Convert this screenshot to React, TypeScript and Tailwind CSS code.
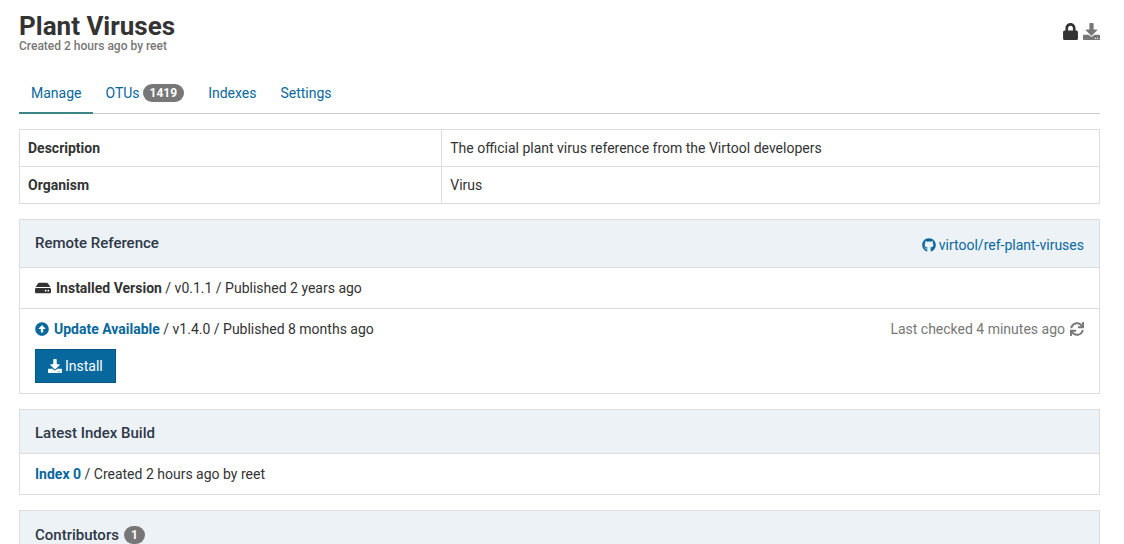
import type { ReactNode } from "react";
import {
  FaArrowAltCircleUp,
  FaDownload,
  FaGithub,
  FaHdd,
  FaLock,
  FaSync,
} from "react-icons/fa";

function Badge({ children }: { children: ReactNode }) {
  return (
    <span className="inline-block rounded-full bg-[#777777] px-[7px] py-[3px] text-center text-xs leading-3 font-bold text-white">
      {children}
    </span>
  );
}

function Tab({ active, children }: { active?: boolean; children: ReactNode }) {
  return (
    <a
      href="#"
      aria-current={active ? "page" : undefined}
      className={
        active
          ? "-mb-px flex items-center gap-[3px] border-b-2 border-[#3c8786] px-3 pt-2.5 pb-[9px] text-[#07689d]"
          : "-mb-px flex items-center gap-[3px] border-b-2 border-transparent px-3 pt-2.5 pb-[9px] text-[#07689d]"
      }
    >
      {children}
    </a>
  );
}

function Panel({ header, children }: { header: ReactNode; children?: ReactNode }) {
  return (
    <section className="mt-[15px] border border-[#dddddd]">
      <header className="flex items-center justify-between bg-[#edf2f7] px-[15px] text-[#2d3748]">
        {header}
      </header>
      {children}
    </section>
  );
}

export default function App() {
  return (
    <main className="h-screen overflow-hidden bg-white pt-3 pr-6 pl-[19px] font-['Roboto',sans-serif] text-sm leading-5 text-[#333333]">
      <header className="flex items-center justify-between">
        <div>
          <h1 className="text-[26px] leading-7 font-bold">Plant Viruses</h1>
          <p className="text-xs leading-3 font-medium text-[#777777]">
            Created 2 hours ago by reet
          </p>
        </div>
        <div className="flex items-center gap-1 pb-0.5 text-[17px]">
          <FaLock aria-label="Locked" />
          <button type="button" aria-label="Download" className="text-[#777777]">
            <FaDownload />
          </button>
        </div>
      </header>

      <nav className="mt-[21px] flex border-b border-[#cccccc]">
        <Tab active>Manage</Tab>
        <Tab>
          OTUs <Badge>1419</Badge>
        </Tab>
        <Tab>Indexes</Tab>
        <Tab>Settings</Tab>
      </nav>

      <table className="mt-[15px] w-full table-fixed border-collapse border border-[#dddddd]">
        <tbody>
          <tr className="border-b border-[#dddddd]">
            <th className="w-[39.1%] border-r border-[#dddddd] p-2 text-left font-bold">
              Description
            </th>
            <td className="p-2">The official plant virus reference from the Virtool developers</td>
          </tr>
          <tr>
            <th className="border-r border-[#dddddd] p-2 text-left font-bold">Organism</th>
            <td className="p-2">Virus</td>
          </tr>
        </tbody>
      </table>

      <Panel
        header={
          <>
            <h2 className="pt-[13px] pb-3.5 text-[15px] leading-5 font-medium">Remote Reference</h2>
            <a href="#" className="flex items-center gap-[3px] pt-0.5 text-[#07689d]">
              <FaGithub /> virtool/ref-plant-viruses
            </a>
          </>
        }
      >
        <div className="flex items-center gap-[5px] border-t border-[#dddddd] px-[15px] py-2.5">
          <FaHdd className="text-base" />
          <span>
            <strong>Installed Version</strong> / v0.1.1 / Published 2 years ago
          </span>
        </div>
        <div className="border-t border-[#dddddd] px-[15px] py-2.5">
          <div className="flex items-center justify-between">
            <div className="flex items-center gap-[5px]">
              <FaArrowAltCircleUp className="text-[#07689d]" />
              <span>
                <strong className="text-[#07689d]">Update Available</strong> / v1.4.0 / Published 8
                months ago
              </span>
            </div>
            <div className="flex items-center gap-[5px] text-[#777777]">
              Last checked 4 minutes ago
              <button type="button" aria-label="Check for updates">
                <FaSync />
              </button>
            </div>
          </div>
          <button
            type="button"
            className="mt-2.5 flex items-center gap-[3px] border border-[#065785] bg-[#07689d] px-3 py-1.5 text-white"
          >
            <FaDownload /> Install
          </button>
        </div>
      </Panel>

      <Panel
        header={
          <h2 className="pt-[13px] pb-2.5 text-[15px] leading-5 font-medium">
            Latest Index Build
          </h2>
        }
      >
        <p className="border-t border-[#dddddd] px-[15px] py-2.5">
          <a href="#" className="font-bold text-[#07689d]">
            Index 0
          </a>{" "}
          / Created 2 hours ago by reet
        </p>
      </Panel>

      <Panel
        header={
          <h2 className="flex items-center gap-[5px] py-3.5 text-[15px] leading-5 font-medium">
            Contributors <Badge>1</Badge>
          </h2>
        }
      />
    </main>
  );
}
